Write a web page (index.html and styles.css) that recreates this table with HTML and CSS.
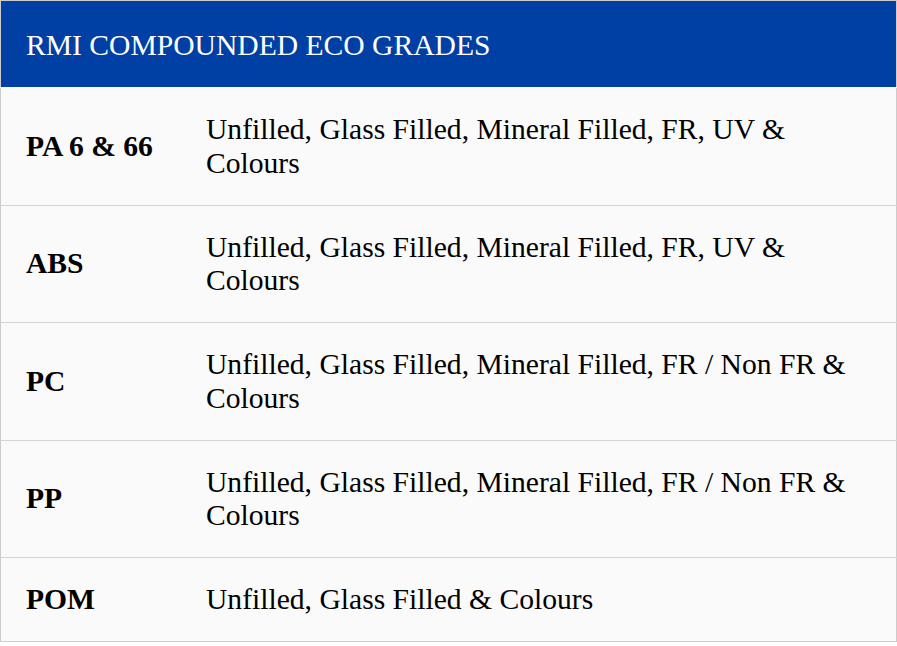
FILE: index.html
```html
<!DOCTYPE html>
<html>
<head>
<meta charset="utf-8">
<link rel="stylesheet" href="styles.css">
</head>
<body>
<table class="grades">
  <thead>
    <tr><th colspan="2" class="title">RMI COMPOUNDED ECO GRADES</th></tr>
  </thead>
  <tbody>
    <tr class="first"><td class="name">PA 6 &amp; 66</td><td class="desc">Unfilled, Glass Filled, Mineral Filled, FR, UV &amp; Colours</td></tr>
    <tr><td class="name">ABS</td><td class="desc">Unfilled, Glass Filled, Mineral Filled, FR, UV &amp; Colours</td></tr>
    <tr><td class="name">PC</td><td class="desc">Unfilled, Glass Filled, Mineral Filled, FR / Non FR &amp; Colours</td></tr>
    <tr><td class="name">PP</td><td class="desc">Unfilled, Glass Filled, Mineral Filled, FR / Non FR &amp; Colours</td></tr>
    <tr><td class="name">POM</td><td class="desc">Unfilled, Glass Filled &amp; Colours</td></tr>
  </tbody>
</table>
</body>
</html>
```
FILE: styles.css
```css
html, body {
  margin: 0;
  padding: 0;
  background: #ffffff;
}
.grades {
  width: 897px;
  border-collapse: collapse;
  border: 1px solid #cccccc;
  font-family: "Liberation Serif", "Times New Roman", serif;
  font-size: 29.6px;
  line-height: 33.5px;
  color: #000000;
  background: #fafafa;
}
.title {
  background: #0040a4;
  color: #ffffff;
  font-weight: normal;
  text-align: left;
  height: 87px;
  padding: 3px 25px 0 25px;
  box-sizing: border-box;
  vertical-align: middle;
}
.grades td {
  border-top: 1px solid #d4d4d4;
  padding: 25px 25px 24.5px 25px;
  vertical-align: middle;
}
.grades .first td {
  border-top-color: #fafafa;
}
.name {
  font-weight: bold;
  width: 130px;
}
.grades .desc {
  padding-right: 30px;
}
```
